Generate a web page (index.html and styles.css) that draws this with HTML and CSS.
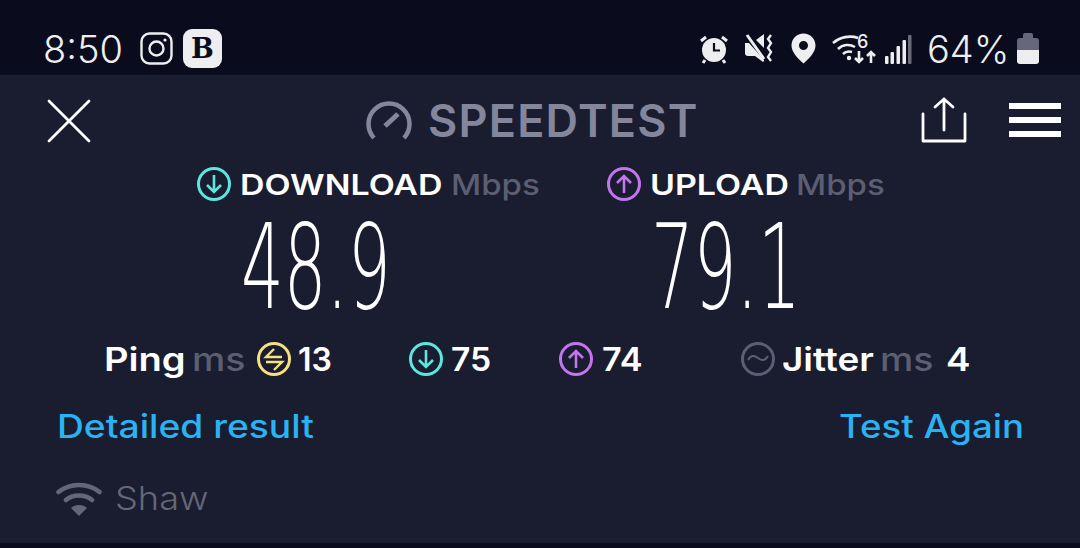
FILE: index.html
```html
<!DOCTYPE html>
<html lang="en">
<head>
    <meta charset="UTF-8">
    <title>Speedtest</title>
    <link rel="stylesheet" href="styles.css">
</head>
<body>
    <div class="status-bar">
        <span class="clock">8:50</span>
        <svg class="ig" width="33" height="33" viewBox="0 0 33 33" fill="none" stroke="#eeeef0" stroke-width="2.4">
            <rect x="1.5" y="1.5" width="30" height="30" rx="8"/>
            <circle cx="16.5" cy="16.5" r="7"/>
            <circle cx="25" cy="8" r="1.6" fill="#eeeef0" stroke="none"/>
        </svg>
        <span class="b-badge">B</span>
        <div class="status-right">
            <svg width="30" height="30" viewBox="0 0 30 30" class="alarm">
                <circle cx="15" cy="16" r="12" fill="#eeeef0"/>
                <path d="M15 9v7.500h6" fill="none" stroke="#0a0b1c" stroke-width="2.200"/>
                <path d="M2 7l5-4M28 7l-5-4M6 26l-2 3M24 26l2 3" stroke="#eeeef0" stroke-width="3" fill="none"/>
            </svg>
            <svg width="31" height="30" viewBox="0 0 31 30" class="mute">
                <path d="M1 9h4l15 17v1l-1 1-8-6H4a3 3 0 0 1-3-3z" fill="#eeeef0"/>
                <path d="M3 1l17 24" stroke="#eeeef0" stroke-width="3" fill="none"/>
                <path d="M12 6l8-6v14z" fill="#eeeef0"/>
                <path d="M27 1l-3 4 3 4-3 5 3 4-3 5 3 4" fill="none" stroke="#eeeef0" stroke-width="2.400"/>
            </svg>
            <svg width="25" height="31" viewBox="0 0 25 31" class="pin">
                <path fill-rule="evenodd" d="M12.500 0.500C5.700 0.500 0.500 5.800 0.500 12.500c0 7 7 13.500 12 18 5-4.500 12-11 12-18C24.500 5.800 19.300 0.500 12.500 0.500zm0 7.500a4.500 4.500 0 1 1 0 9 4.500 4.500 0 0 1 0-9z" fill="#eeeef0"/>
            </svg>
            <svg width="45" height="32" viewBox="0 0 45 32" class="wifi" fill="none" stroke="#eeeef0" stroke-width="2.600">
                <path d="M1 10c7-6 17-8 25-5M6 16c5-5 12-5 17-2M11 21c3-3 6-3 9-2"/>
                <circle cx="17" cy="25" r="2.200" fill="#eeeef0" stroke="none"/>
                <path d="M27 18v11M23 25l4 4 4-4M39 30V19M35 23l4-4 4 4"/>
                <text x="25" y="15" class="wifi-six">6</text>
            </svg>
            <svg width="28" height="30" viewBox="0 0 28 30" class="signal">
                <rect x="0" y="22" width="3.500" height="8" rx="1" fill="#eeeef0"/>
                <rect x="5.500" y="18" width="3.500" height="12" rx="1" fill="#eeeef0"/>
                <rect x="11.500" y="12" width="3.500" height="18" rx="1" fill="#eeeef0"/>
                <rect x="17.500" y="6" width="3.500" height="24" rx="1" fill="#eeeef0"/>
                <rect x="23" y="1" width="3.500" height="29" rx="1" fill="#6a6b78"/>
            </svg>
            <span class="battery-pct">64%</span>
            <svg width="22" height="31" viewBox="0 0 22 31">
                <path d="M6 2a2 2 0 0 1 2-2h6a2 2 0 0 1 2 2v3h3a3 3 0 0 1 3 3v9H0V8a3 3 0 0 1 3-3h3z" fill="#66677a"/>
                <path d="M0 17h22v11a3 3 0 0 1-3 3H3a3 3 0 0 1-3-3z" fill="#eeeef0"/>
            </svg>
        </div>
    </div>

    <div class="app">
        <div class="topbar">
            <svg class="close" width="44" height="44" viewBox="0 0 44 44" stroke="#fff" stroke-width="2.800" stroke-linecap="round">
                <path d="M2 2l40 40M42 2L2 42"/>
            </svg>
            <div class="logo">
                <svg width="48" height="42" viewBox="0 0 48 42" fill="none" stroke="#84869c" stroke-width="4.500">
                    <path d="M9 39A20.500 20.500 0 1 1 39 39"/>
                    <path d="M20 27l13-12" stroke-width="5"/>
                </svg>
                <span class="logo-text">SPEEDTEST</span>
            </div>
            <svg class="share" width="46" height="46" viewBox="0 0 46 46" fill="none" stroke="#fff" stroke-width="2.800" stroke-linejoin="round" stroke-linecap="round">
                <path d="M2 17v27h42V17"/>
                <path d="M23 33V2M14 10l9-8 9 8"/>
            </svg>
            <div class="menu"><i></i><i></i><i></i></div>
        </div>

        <div class="results">
            <div class="result result-down">
                <div class="result-label">
                    <svg width="36" height="36" viewBox="0 0 36 36" fill="none" stroke="#5de6dd" stroke-width="3">
                        <circle cx="18" cy="18" r="15.500"/>
                        <path d="M18 9v17M11 19l7 7 7-7" stroke-width="2.600"/>
                    </svg>
                    <span class="stretch label-name w-download">DOWNLOAD</span>
                    <span class="stretch label-unit">Mbps</span>
                </div>
                <div class="big-num">48.9</div>
            </div>
            <div class="result">
                <div class="result-label">
                    <svg width="36" height="36" viewBox="0 0 36 36" fill="none" stroke="#c276ee" stroke-width="3">
                        <circle cx="18" cy="18" r="15.500"/>
                        <path d="M18 27V10M11 17l7-7 7 7" stroke-width="2.600"/>
                    </svg>
                    <span class="stretch label-name w-upload">UPLOAD</span>
                    <span class="stretch label-unit">Mbps</span>
                </div>
                <div class="big-num">79.1</div>
            </div>
        </div>

        <div class="stats">
            <div class="stat">
                <span class="stretch stat-name w-ping">Ping</span>
                <span class="stretch stat-unit">ms</span>
                <svg width="36" height="36" viewBox="0 0 36 36" fill="none" stroke="#f5e27e" stroke-width="3">
                    <circle cx="18" cy="18" r="15.500"/>
                    <path d="M26 16H10l8-8M10 21h16l-8 8" stroke-width="2.400"/>
                </svg>
                <span class="stretch stat-val w-13">13</span>
            </div>
            <div class="stat stat-dl">
                <svg width="36" height="36" viewBox="0 0 36 36" fill="none" stroke="#5de6dd" stroke-width="3">
                    <circle cx="18" cy="18" r="15.500"/>
                    <path d="M18 9v17M11 19l7 7 7-7" stroke-width="2.600"/>
                </svg>
                <span class="stretch stat-val w-75">75</span>
            </div>
            <div class="stat stat-ul">
                <svg width="36" height="36" viewBox="0 0 36 36" fill="none" stroke="#c276ee" stroke-width="3">
                    <circle cx="18" cy="18" r="15.500"/>
                    <path d="M18 27V10M11 17l7-7 7 7" stroke-width="2.600"/>
                </svg>
                <span class="stretch stat-val w-74">74</span>
            </div>
            <div class="stat stat-jitter">
                <svg width="36" height="36" viewBox="0 0 36 36" fill="none" stroke="#5c5e72" stroke-width="3">
                    <circle cx="18" cy="18" r="15.500"/>
                    <path d="M8 19c3-5 6-5 10-2s7 3 10-2" stroke-width="2"/>
                </svg>
                <span class="stretch stat-name w-jitter">Jitter</span>
                <span class="stretch stat-unit jitter-unit">ms</span>
                <span class="stretch stat-val w-4">4</span>
            </div>
        </div>

        <div class="links">
            <span class="stretch w-detail">Detailed result</span>
            <span class="stretch w-again">Test Again</span>
        </div>

        <div class="network">
            <svg width="46" height="36" viewBox="0 0 46 36" fill="none" stroke="#656777" stroke-width="4.500" stroke-linecap="round">
                <path d="M2.500 11c11-9.500 30-9.500 41 0M10 19c7-6 19-6 26 0"/>
                <path d="M23 35l-8-8c4-4 12-4 16 0z" fill="#656777" stroke="none"/>
            </svg>
            <span class="stretch network-name">Shaw</span>
        </div>
    </div>
</body>
</html>
```

FILE: styles.css
```css
* {
    box-sizing: border-box;
}
html, body {
    margin: 0;
    height: 548px;
    overflow: hidden;
}
body {
    background-color: #0a0b1c;
    color: #fff;
    font-family: Inter, "Noto Sans", sans-serif;
    display: flex;
    flex-direction: column;
}
svg {
    display: block;
    flex: none;
}

/* Inter runs narrower than the app's font, so text is widened to fit its box */
.stretch {
    display: inline-block;
    flex: none;
    white-space: nowrap;
    transform-origin: left center;
}

/* status bar */
.status-bar {
    height: 75px;
    display: flex;
    align-items: center;
    padding: 22px 41px 0 43px;
    color: #eeeef0;
}
.clock {
    font-size: 38px;
    font-weight: 300;
    width: 97px;
}
.b-badge {
    width: 39px;
    height: 39px;
    margin-left: 10px;
    border-radius: 9px;
    background-color: #eeeef0;
    color: #0a0b1c;
    font: 700 27px/39px "DejaVu Serif", serif;
    text-align: center;
}
.status-right {
    margin-left: auto;
    display: flex;
    align-items: center;
}
.mute {
    margin-left: 15px;
}
.pin {
    margin-left: 16px;
}
.wifi {
    margin-left: 16px;
    overflow: visible;
}
.wifi-six {
    font: 500 18px Inter, sans-serif;
    fill: #eeeef0;
    stroke: none;
}
.signal {
    margin-left: 8px;
}
.battery-pct {
    font-size: 38px;
    font-weight: 300;
    margin-left: 14px;
    width: 90px;
}

/* app */
.app {
    height: 468px;
    background-color: #1a1c30;
    display: flex;
    flex-direction: column;
}
.topbar {
    display: flex;
    align-items: center;
    height: 90px;
    padding: 0 19px 0 47px;
}
.close {
    margin-top: 2px;
}
.logo {
    display: flex;
    align-items: center;
    margin-left: 274px;
    gap: 15px;
}
.logo-text {
    color: #84869c;
    font-size: 45px;
    font-weight: 600;
    letter-spacing: 1.2px;
}
.share {
    margin-left: auto;
}
.menu {
    margin-left: 42px;
    width: 52px;
    display: flex;
    flex-direction: column;
    gap: 8px;
}
.menu i {
    display: block;
    height: 6px;
    background-color: #fff;
}

/* results */
.results {
    display: flex;
    padding-left: 196px;
}
.result-down {
    width: 410px;
}
.result-label {
    display: flex;
    align-items: center;
    height: 38px;
    font-size: 29px;
}
.label-name {
    margin-left: 8px;
    font-weight: 600;
    transform: scaleX(1.17);
}
.w-download {
    width: 203px;
}
.w-upload {
    width: 138px;
}
.label-unit {
    margin-left: 8px;
    width: 87px;
    color: #5c5e72;
    font-weight: 500;
    transform: scaleX(1.14);
}
.big-num {
    font-family: "DejaVu Sans", sans-serif;
    font-size: 118px;
    font-weight: 200;
    line-height: 124px;
    margin-top: 2px;
    margin-left: 45px;
    transform: scaleX(0.57);
    transform-origin: left center;
}

/* ping row */
.stats {
    display: flex;
    align-items: center;
    height: 44px;
    margin-top: 8px;
    padding-left: 104px;
    font-size: 32px;
}
.stat {
    display: flex;
    align-items: center;
}
.stat-name {
    font-weight: 600;
}
.stat-unit {
    margin-left: 9px;
    margin-right: 12px;
    width: 52px;
    color: #5c5e72;
    font-weight: 500;
    transform: scaleX(1.17);
}
.stat-val {
    margin-left: 6px;
    font-weight: 600;
    transform: scaleX(1.05);
}
.w-ping {
    width: 79px;
    transform: scaleX(1.19);
}
.w-jitter {
    width: 90px;
    margin-left: 6px;
    transform: scaleX(1.15);
}
.w-13 {
    width: 32px;
    transform: none;
}
.w-75 {
    width: 39px;
    margin-left: 7px;
}
.w-74 {
    width: 40px;
    margin-left: 8px;
    transform: scaleX(1.07);
}
.w-4 {
    margin-left: 1px;
    transform: scaleX(1.15);
}
.stat-dl {
    margin-left: 78px;
}
.stat-ul {
    margin-left: 68px;
}
.stat-jitter {
    margin-left: 98px;
}
.jitter-unit {
    margin-left: 8px;
    margin-right: 13px;
}

/* links */
.links {
    display: flex;
    justify-content: space-between;
    padding: 0 59px 0 57px;
    margin-top: 26px;
    color: #29b3f2;
    font-size: 32px;
    font-weight: 500;
}
.w-detail {
    width: 257px;
    transform: scaleX(1.163);
}
.w-again {
    width: 182px;
    transform: scaleX(1.145);
}

/* network */
.network {
    display: flex;
    align-items: center;
    margin-top: 33px;
    padding-left: 56px;
    gap: 13px;
    color: #656777;
}
.network-name {
    font-size: 32px;
    font-weight: 300;
    transform: scaleX(1.13);
}
```
